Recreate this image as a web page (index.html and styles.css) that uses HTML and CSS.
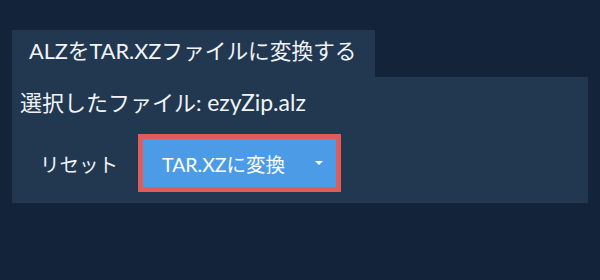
FILE: index.html
```html
<!DOCTYPE html>
<html lang="ja">
<head>
<meta charset="utf-8">
<link rel="stylesheet" href="styles.css">
</head>
<body>
<div class="wrap">
  <div class="tab">ALZをTAR.XZファイルに変換する</div>
  <div class="panel">
    <div class="file">選択したファイル: <span class="name">ezyZip.alz</span></div>
    <div class="actions">
      <button class="reset">リセット</button>
      <div class="convert-outline">
        <button class="convert">
          <span class="label">TAR.XZに変換</span>
          <span class="caret"></span>
        </button>
      </div>
    </div>
  </div>
</div>
</body>
</html>
```
FILE: styles.css
```css
html, body {
  margin: 0;
  padding: 0;
  background: #12233a;
  width: 600px;
  height: 280px;
  overflow: hidden;
  font-family: Lato, "Noto Sans CJK JP", sans-serif;
  color: #f1f4f7;
}
.wrap {
  padding: 30px 12px 0 12px;
}
.tab {
  display: inline-block;
  background: #223750;
  height: 47px;
  line-height: 42px;
  padding: 0 17px;
  font-size: 21.7px;
  box-sizing: border-box;
  width: 363px;
  white-space: nowrap;
}
.panel {
  background: #223750;
  height: 126px;
  box-sizing: border-box;
  padding: 9px 8px 0 8px;
}
.file {
  font-size: 22px;
  line-height: 32px;
}
.name {
  font-size: 23px;
}
.actions {
  display: flex;
  align-items: center;
  margin-top: 15px;
}
.reset {
  background: none;
  border: none;
  color: #f1f4f7;
  font-family: inherit;
  font-size: 19.5px;
  padding: 0;
  margin-left: 20px;
  width: 98px;
  text-align: left;
  height: 40px;
}
.convert-outline {
  border: 4px solid #de5d5a;
  padding: 1px;
  background: #de5d5a;
}
.convert {
  display: flex;
  align-items: center;
  background: #4c9be6;
  border: none;
  color: #ffffff;
  font-family: inherit;
  font-size: 19.5px;
  height: 48px;
  width: 193px;
  padding: 0 0 0 19px;
  box-sizing: border-box;
  margin: 0;
}
.label {
  flex: 1;
  text-align: left;
}
.caret {
  width: 0;
  height: 0;
  border-left: 4px solid transparent;
  border-right: 4px solid transparent;
  border-top: 4px solid #ffffff;
  margin-right: 13px;
}
```
